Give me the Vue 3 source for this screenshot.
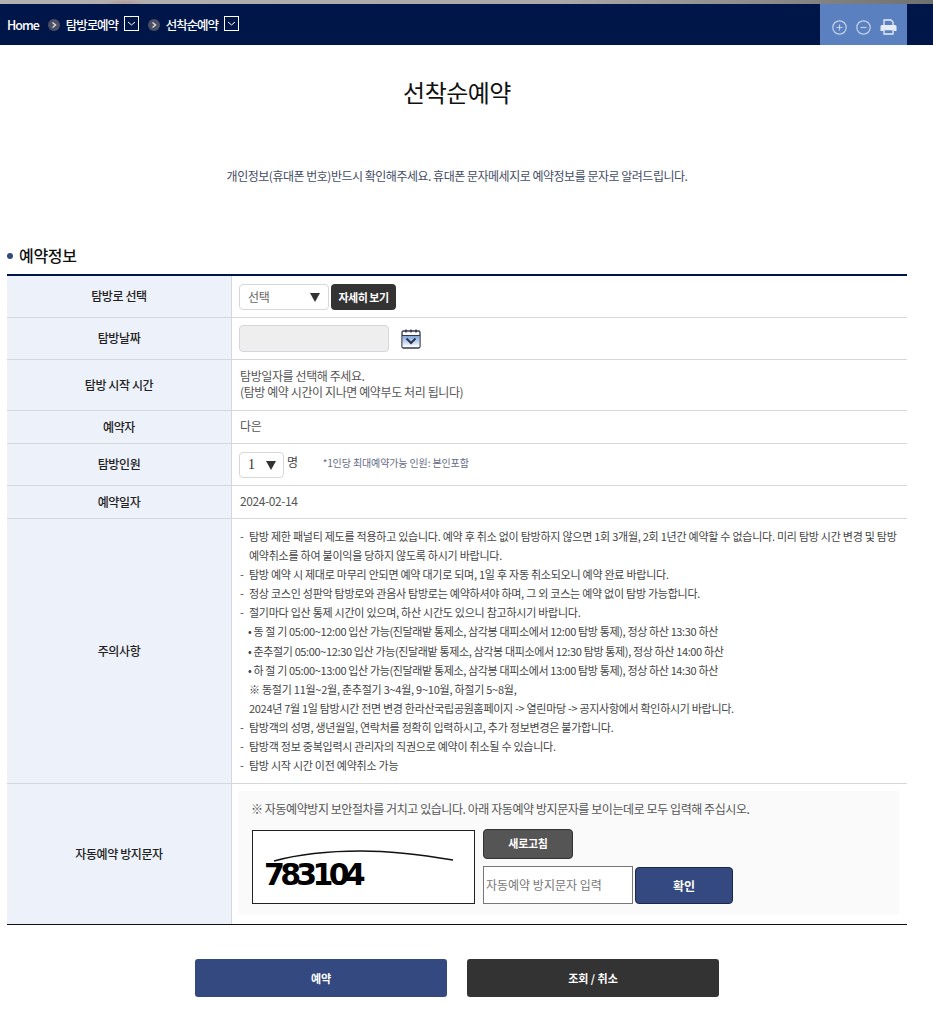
<script setup>
const notes = [
  { c: 'n', t: '탐방 제한 패널티 제도를 적용하고 있습니다. 예약 후 취소 없이 탐방하지 않으면 1회 3개월, 2회 1년간 예약할 수 없습니다. 미리 탐방 시간 변경 및 탐방' },
  { c: 'i', t: '예약취소를 하여 불이익을 당하지 않도록 하시기 바랍니다.' },
  { c: 'n', t: '탐방 예약 시 제대로 마무리 안되면 예약 대기로 되며, 1일 후 자동 취소되오니 예약 완료 바랍니다.' },
  { c: 'n', t: '정상 코스인 성판악 탐방로와 관음사 탐방로는 예약하셔야 하며, 그 외 코스는 예약 없이 탐방 가능합니다.' },
  { c: 'n', t: '절기마다 입산 통제 시간이 있으며, 하산 시간도 있으니 참고하시기 바랍니다.' },
  { c: 'b', t: '• 동 절 기 05:00~12:00 입산 가능(진달래밭 통제소, 삼각봉 대피소에서 12:00 탐방 통제), 정상 하산 13:30 하산' },
  { c: 'b', t: '• 춘추절기 05:00~12:30 입산 가능(진달래밭 통제소, 삼각봉 대피소에서 12:30 탐방 통제), 정상 하산 14:00 하산' },
  { c: 'b', t: '• 하 절 기 05:00~13:00 입산 가능(진달래밭 통제소, 삼각봉 대피소에서 13:00 탐방 통제), 정상 하산 14:30 하산' },
  { c: 'i', t: '※ 동절기 11월~2월, 춘추절기 3~4월, 9~10월, 하절기 5~8월,' },
  { c: 'i t', t: '2024년 7월 1일 탐방시간 전면 변경 한라산국립공원홈페이지 -> 열린마당 -> 공지사항에서 확인하시기 바랍니다.' },
  { c: 'n', t: '탐방객의 성명, 생년월일, 연락처를 정확히 입력하시고, 추가 정보변경은 불가합니다.' },
  { c: 'n', t: '탐방객 정보 중복입력시 관리자의 직권으로 예약이 취소될 수 있습니다.' },
  { c: 'n', t: '탐방 시작 시간 이전 예약취소 가능' },
]
</script>

<template>
  <div class="page">
    <div class="strip"></div>
    <nav class="nav">
      <div class="crumbs">
        <span class="crumb home">Home</span>
        <span class="sep"><svg width="12" height="12" viewBox="0 0 12 12"><circle cx="6" cy="6" r="6" fill="#4b4f63"/><path d="M4.500 3.500 7.500 6 4.500 8.500" fill="none" stroke="#d5d7dd" stroke-width="1.500"/></svg></span>
        <span class="crumb">탐방로예약</span>
        <span class="drop"><svg width="13" height="13" viewBox="0 0 13 13"><path d="M3 5 6.500 8 10 5" fill="none" stroke="#fff" stroke-width="1"/></svg></span>
        <span class="sep"><svg width="12" height="12" viewBox="0 0 12 12"><circle cx="6" cy="6" r="6" fill="#4b4f63"/><path d="M4.500 3.500 7.500 6 4.500 8.500" fill="none" stroke="#d5d7dd" stroke-width="1.500"/></svg></span>
        <span class="crumb">선착순예약</span>
        <span class="drop"><svg width="13" height="13" viewBox="0 0 13 13"><path d="M3 5 6.500 8 10 5" fill="none" stroke="#fff" stroke-width="1"/></svg></span>
      </div>
      <div class="tools">
        <svg width="15" height="15" viewBox="0 0 15 15"><circle cx="7.500" cy="7.500" r="6.700" fill="none" stroke="#c3d2ea" stroke-width="1.200"/><path d="M4.500 7.500h6M7.500 4.500v6" stroke="#c3d2ea" stroke-width="1.200"/></svg>
        <svg width="15" height="15" viewBox="0 0 15 15"><circle cx="7.500" cy="7.500" r="6.700" fill="none" stroke="#c3d2ea" stroke-width="1.200"/><path d="M4.500 7.500h6" stroke="#c3d2ea" stroke-width="1.200"/></svg>
        <svg width="17" height="16" viewBox="0 0 17 16"><path d="M4 6V1h7l2 2v3" fill="none" stroke="#e6ecf7" stroke-width="1.300"/><path d="M2 6h13a1.500 1.500 0 0 1 1.500 1.500V12h-3V10h-10v2h-3V7.500A1.500 1.500 0 0 1 2 6z" fill="#e6ecf7"/><path d="M4 10.500h9v4.500H4z" fill="none" stroke="#e6ecf7" stroke-width="1.300"/></svg>
      </div>
    </nav>

    <div class="head">
      <h1 class="title">선착순예약</h1>
      <p class="notice">개인정보(휴대폰 번호)반드시 확인해주세요. 휴대폰 문자메세지로 예약정보를 문자로 알려드립니다.</p>
    </div>

    <h2 class="section"><i class="dot"></i>예약정보</h2>

    <div class="table">
      <div class="row h42">
        <div class="th">탐방로 선택</div>
        <div class="td">
          <div class="select wide"><span>선택</span><i class="tri"></i></div>
          <button class="detail">자세히 보기</button>
        </div>
      </div>
      <div class="row h42">
        <div class="th">탐방날짜</div>
        <div class="td">
          <div class="dateinput"></div>
          <svg class="cal" width="20" height="21" viewBox="0 0 20 21">
            <defs><linearGradient id="calfill" x1="0" y1="0" x2="0" y2="1"><stop offset="0" stop-color="#7ea6da"/><stop offset="1" stop-color="#fff"/></linearGradient></defs>
            <rect x="1" y="3" width="18" height="17" rx="1.500" fill="#fff" stroke="#33384a" stroke-width="1.300"/>
            <rect x="1.700" y="8" width="16.600" height="11" fill="url(#calfill)"/>
            <path d="M1 7.500h18" stroke="#33384a" stroke-width="1"/>
            <path d="M5 1.500v3M10 1.500v3M15 1.500v3" stroke="#33384a" stroke-width="1.500"/>
            <path d="M5.500 10.500 10 15l4.500-4.500" fill="none" stroke="#2a3350" stroke-width="2"/>
          </svg>
        </div>
      </div>
      <div class="row h51">
        <div class="th">탐방 시작 시간</div>
        <div class="td col">
          <div>탐방일자를 선택해 주세요.</div>
          <div>(탐방 예약 시간이 지나면 예약부도 처리 됩니다)</div>
        </div>
      </div>
      <div class="row h33">
        <div class="th">예약자</div>
        <div class="td"><span class="up">다은</span></div>
      </div>
      <div class="row h42">
        <div class="th">탐방인원</div>
        <div class="td">
          <div class="select small"><span class="num">1</span><i class="tri"></i></div>
          <span class="unit">명</span>
          <span class="hint">*1인당 최대예약가능 인원: 본인포함</span>
        </div>
      </div>
      <div class="row h33">
        <div class="th">예약일자</div>
        <div class="td"><span class="up">2024-02-14</span></div>
      </div>
      <div class="row h265">
        <div class="th">주의사항</div>
        <div class="td notes">
          <div v-for="(n, i) in notes" :key="i" class="note" :class="n.c">{{ n.t }}</div>
        </div>
      </div>
      <div class="row last">
        <div class="th">자동예약 방지문자</div>
        <div class="td captcha-cell">
          <div class="captcha">
            <p class="cap-msg">※ 자동예약방지 보안절차를 거치고 있습니다. 아래 자동예약 방지문자를 보이는데로 모두 입력해 주십시오.</p>
            <div class="cap-body">
              <div class="cap-img">
                <svg class="cap-line" width="221" height="72" viewBox="0 0 221 72"><path d="M21 30C50 22 78 20 108 20S170 24 200 29" fill="none" stroke="#111" stroke-width="1.600"/></svg>
                <span class="cap-text">783104</span>
              </div>
              <div class="cap-side">
                <button class="refresh">새로고침</button>
                <div class="cap-input">
                  <div class="fakeinput">자동예약 방지문자 입력</div>
                  <button class="confirm">확인</button>
                </div>
              </div>
            </div>
          </div>
        </div>
      </div>
    </div>

    <div class="actions">
      <button class="big blue">예약</button>
      <button class="big dark">조회 / 취소</button>
    </div>
  </div>
</template>

<style>
html, body { margin: 0; background: #fff; }
</style>

<style scoped>
.page { width: 933px; height: 1021px; overflow: hidden; position: relative; font-family: "Noto Sans CJK KR", "Noto Sans", sans-serif; color: #444; font-size: 12px; letter-spacing: -0.4px; }
.strip { height: 4px; background: radial-gradient(ellipse 20px 3px at 125px 3px, #b89a9a, transparent), linear-gradient(90deg, #b2b0b0 0, #aaa8a8 60%, #8e8e8e 80%, #6f7070 100%); }
.nav { height: 41px; background: #001548; display: flex; justify-content: space-between; padding-right: 26px; }
.crumbs { display: flex; align-items: center; padding-left: 7px; color: #fff; font-size: 12.500px; font-weight: 500; letter-spacing: -1.1px; }
.home { letter-spacing: -1px; }
.sep { display: flex; margin: 0 6px 0 9px; }
.drop { width: 13px; height: 13px; border: 1px solid #fff; margin-left: 6px; display: flex; margin-top: -2px; }
.tools { width: 87px; background: #5b80c0; display: flex; align-items: center; gap: 9px; padding-left: 12px; padding-top: 5px; box-sizing: border-box; height: 41px; }
.head { width: 914px; }
.title { margin: 0; padding-top: 31px; height: 76px; box-sizing: border-box; text-align: center; font-size: 24px; font-weight: 400; color: #111; letter-spacing: -0.5px; line-height: 32px; }
.notice { margin: 46px 0 0; text-align: center; font-size: 12px; line-height: 18px; color: #444d63; letter-spacing: -0.49px; }
.section { margin: 0; position: absolute; top: 243px; left: 7px; display: flex; align-items: center; font-size: 16px; font-weight: 500; color: #111; letter-spacing: -0.3px; line-height: 24px; }
.dot { width: 6px; height: 6px; background: #34497f; border-radius: 50%; margin-right: 6px; margin-top: 2px; }
.table { position: absolute; top: 274px; left: 7px; width: 900px; border-top: 2px solid #001548; border-bottom: 1px solid #111; box-sizing: border-box; height: 651px; }
.row { display: flex; border-bottom: 1px solid #d5d7dc; box-sizing: border-box; }
.row.last { border-bottom: 0; height: 140px; }
.h42 { height: 42px; }
.h51 { height: 51px; }
.h33 { height: 33px; }
.h265 { height: 265px; }
.th { width: 225px; flex: none; background: #edf1f9; border-right: 1px solid #d5d7dc; display: flex; align-items: center; justify-content: center; font-weight: 500; color: #222; padding-bottom: 2px; box-sizing: border-box; }
.td { flex: 1; padding-left: 7px; display: flex; align-items: center; min-width: 0; color: #555; }
.td.col { flex-direction: column; align-items: flex-start; justify-content: center; line-height: 16px; padding: 0 0 3px 8px; }
.up { margin: -3px 0 0 1px; }
.select { height: 26px; border: 1px solid #d5d7dc; border-radius: 4px; box-sizing: border-box; display: flex; align-items: center; justify-content: space-between; background: #fff; color: #666; }
.wide { width: 90px; padding: 0 8px 0 8px; }
.small { width: 45px; padding: 0 7px 0 8px; }
.num { font-family: "Liberation Serif", serif; font-size: 14px; color: #333; }
.tri { width: 0; height: 0; border-left: 5px solid transparent; border-right: 5px solid transparent; border-top: 9px solid #333; margin-top: 2px; }
.detail { margin-left: 2px; height: 26px; width: 65px; background: #333; color: #fff; border: 0; border-radius: 4px; font: 700 11px "Noto Sans CJK KR", sans-serif; letter-spacing: -0.5px; padding: 0; }
.dateinput { width: 150px; height: 27px; background: #eee; border: 1px solid #d5d7dc; border-radius: 4px; box-sizing: border-box; }
.cal { margin-left: 12px; }
.unit { margin-left: 3px; margin-top: -6px; color: #444; }
.hint { margin-left: 25px; font-size: 10px; margin-top: -5px; color: #666a85; letter-spacing: -0.12px; }
.notes { display: block; padding: 8px 0 0 8px; }
.note { line-height: 19.100px; font-size: 11px; color: #444; white-space: nowrap; letter-spacing: -0.25px; }
.note.n::before { content: "-"; display: inline-block; width: 9px; }
.note.i { padding-left: 9px; }
.note.t { letter-spacing: -0.3px; }
.note.b { padding-left: 8px; letter-spacing: -0.36px; }
.captcha-cell { display: block; padding: 7px 0 0 7px; }
.captcha { width: 660px; height: 124px; background: #fafafa; padding: 9px 12px 0; box-sizing: border-box; }
.cap-msg { margin: 0; line-height: 18px; color: #555; font-size: 12px; letter-spacing: -0.43px; }
.cap-body { display: flex; margin: 11px 0 0 1px; }
.cap-img { width: 223px; height: 74px; border: 1px solid #222; box-sizing: border-box; background: #fff; position: relative; margin-top: 1px; overflow: hidden; }
.cap-line { position: absolute; left: 0; top: 0; }
.cap-text { position: absolute; left: 11px; top: 24px; font: 700 30px/40px "DejaVu Sans", sans-serif; letter-spacing: -4.700px; color: #000; }
.cap-side { margin-left: 8px; display: flex; flex-direction: column; }
.refresh { width: 90px; height: 30px; background: #555; border: 1px solid #333; border-radius: 4px; color: #fff; font: 700 11px "Noto Sans CJK KR", sans-serif; letter-spacing: -0.3px; padding: 0 0 2px; box-sizing: border-box; }
.cap-input { display: flex; margin-top: 7px; gap: 2px; }
.fakeinput { width: 150px; height: 38px; border: 1px solid #777; box-sizing: border-box; background: #fff; color: #777; line-height: 36px; padding-left: 2px; font-size: 12px; letter-spacing: 0; }
.confirm { width: 98px; height: 37px; margin-top: 1px; background: #34497f; border: 1px solid #1c2744; border-radius: 4px; color: #fff; font: 700 12px "Noto Sans CJK KR", sans-serif; padding: 0; box-sizing: border-box; }
.actions { position: absolute; top: 959px; left: 195px; display: flex; gap: 20px; }
.big { width: 252px; height: 38px; border: 0; border-radius: 3px; color: #fff; font: 700 11px "Noto Sans CJK KR", sans-serif; padding: 0; }
.blue { background: #34497f; }
.dark { background: #333; }
</style>
